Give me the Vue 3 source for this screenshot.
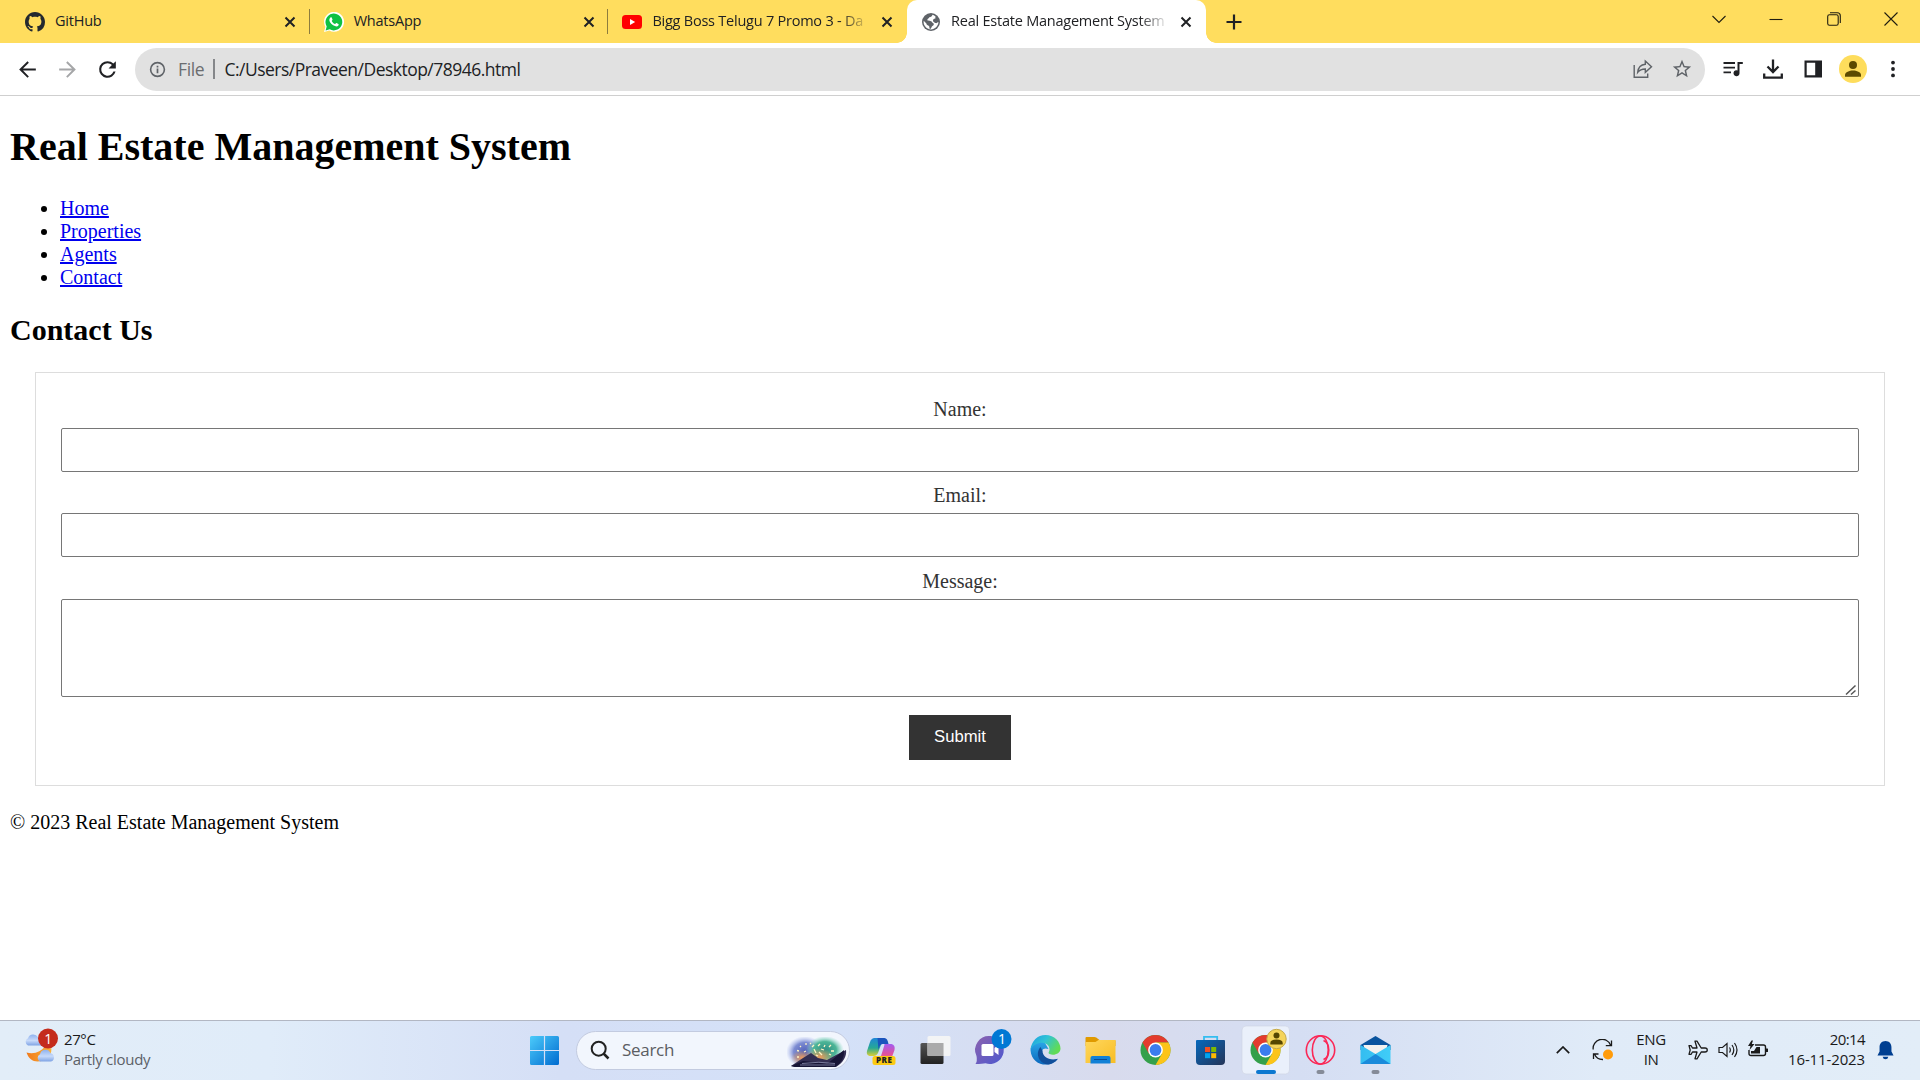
<script setup>
const links = ['Home', 'Properties', 'Agents', 'Contact']
const tabs = [
  { icon: 'github', title: 'GitHub', cls: 't-github' },
  { icon: 'whatsapp', title: 'WhatsApp', cls: 't-whatsapp' },
  { icon: 'youtube', title: 'Bigg Boss Telugu 7 Promo 3 - Da', cls: 't-youtube' },
  { icon: 'globe', title: 'Real Estate Management System', cls: 't-active', active: true },
]
</script>

<template>
  <div class="screen">
    <div class="tabstrip">
      <div v-for="t in tabs" :key="t.icon" class="tab" :class="[t.cls, { active: t.active }]">
        <svg v-if="t.icon === 'github'" class="fav" viewBox="0 0 16 16"><path fill="#24292f" d="M8 0C3.58 0 0 3.58 0 8c0 3.54 2.29 6.53 5.47 7.59.4.07.55-.17.55-.38 0-.19-.01-.82-.01-1.49-2.01.37-2.53-.49-2.69-.94-.09-.23-.48-.94-.82-1.13-.28-.15-.68-.52-.01-.53.63-.01 1.08.58 1.23.82.72 1.21 1.87.87 2.33.66.07-.52.28-.87.51-1.07-1.78-.2-3.64-.89-3.64-3.95 0-.87.31-1.59.82-2.15-.08-.2-.36-1.02.08-2.12 0 0 .67-.21 2.2.82.64-.18 1.32-.27 2-.27s1.36.09 2 .27c1.53-1.04 2.2-.82 2.2-.82.44 1.1.16 1.92.08 2.12.51.56.82 1.27.82 2.15 0 3.07-1.87 3.75-3.65 3.95.29.25.54.73.54 1.48 0 1.07-.01 1.93-.01 2.2 0 .21.15.46.55.38A8.01 8.01 0 0 0 16 8c0-4.42-3.58-8-8-8z" /></svg>
        <svg v-else-if="t.icon === 'whatsapp'" class="fav" viewBox="0 0 20 20"><path fill="#fff" d="M0 20l1.4-5.2A10 10 0 1 1 5.3 18.6z" /><path fill="#0fc143" d="M1.6 18.4l1.1-4A8.4 8.4 0 1 1 5.7 17.3z" /><path fill="#fff" d="M7 5.3c.4 0 .6 0 .8.5l.7 1.7c.1.3 0 .5-.8 1.4.8 1.5 2 2.6 3.5 3.2.9-1 .9-1.200 1.300-1.100l1.900.900c.4.2.3.9 0 1.500-.6.8-1.700 1.200-2.800.900-3.600-1-6-3.900-6.300-6 0-1.500.9-3 1.700-3z" /></svg>
        <svg v-else-if="t.icon === 'youtube'" class="fav" viewBox="0 0 20 20"><rect y="3" width="20" height="14" rx="3.5" fill="#f00" /><path fill="#fff" d="M8 7l5.200 3L8 13z" /></svg>
        <svg v-else class="fav" viewBox="0 0 20 20"><circle cx="10" cy="10" r="9" fill="#5f6368" /><path fill="#fff" d="M11.500 2.800c-.5 1.700-1.300 2.400-3.200 2.500-.2 1.400-1.800 1.200-2 2.600.9 1.300 3.900.4 4.700 2.100.5 1.200 1.900 1 1.800 2.400-.2 1.300-1.700 1.300-2.200 2.500-.2.9-1.100 2-1.600 2.200-.9-.9-.3-2.300-1-3.200C6.900 13 5.500 13 5.400 11.400L2.700 8.800c-.2 1 0 1.800 0 2.500.7 3.200 3.400 6.100 7.300 6.100s7.400-3.500 7.400-7.400c-1.300.5-1.400 1.300-2.700 1.100-1.400-.2-1.400-1.500-2.700-1.700 0-2 .5-2.800 2.400-2.800.2-.9-.4-1.100.3-1.800A7 7 0 0 0 11.500 2.800z" /></svg>
        <span class="tab-title">{{ t.title }}</span>
        <svg class="tab-x" viewBox="0 0 12 12"><path d="M1.500 1.500l9 9M10.500 1.500l-9 9" stroke="#202124" stroke-width="2" /></svg>
      </div>
      <svg class="newtab" viewBox="0 0 16 16"><path d="M8 .5v15M.5 8h15" stroke="#202124" stroke-width="2.200" /></svg>
      <div class="winbtns">
        <svg viewBox="0 0 14 14"><path d="M.5 4l6.500 6.500L13.500 4" /></svg>
        <svg viewBox="0 0 14 14"><path d="M.5 7.500h13" /></svg>
        <svg viewBox="0 0 14 14"><rect x=".7" y="2.700" width="10.500" height="10.500" rx="1.800" /><path d="M3 .700h7.300a3 3 0 0 1 3 3V11" /></svg>
        <svg viewBox="0 0 14 14"><path d="M.5.5l13 13M13.500.5l-13 13" /></svg>
      </div>
    </div>

    <div class="toolbar">
      <div class="nav">
        <svg viewBox="0 0 24 24"><path fill="#202124" d="M20 11.100H7.700l5.600-5.700L12 4l-8 8 8 8 1.300-1.400-5.600-5.700H20z" /></svg>
        <svg viewBox="0 0 24 24"><path fill="#a5a6a8" d="M4 11.100h12.300l-5.600-5.700L12 4l8 8-8 8-1.300-1.400 5.600-5.700H4z" /></svg>
        <svg viewBox="0 0 24 24"><path fill="#202124" d="M17.650 6.350A7.960 7.960 0 0 0 12 4a8 8 0 1 0 7.730 10h-2.080A6 6 0 1 1 12 6c1.660 0 3.140.69 4.220 1.780L13 11h7V4z" /></svg>
      </div>
      <div class="omnibox">
        <svg class="info" viewBox="0 0 18 18"><circle cx="9" cy="9" r="7.300" fill="none" stroke="#5f6368" stroke-width="1.700" /><path d="M9 8v5M9 5v1.800" stroke="#5f6368" stroke-width="1.800" /></svg>
        <span class="scheme">File</span>
        <i class="bar"></i>
        <span class="url">C:/Users/Praveen/Desktop/78946.html</span>
        <svg class="share" viewBox="0 0 20 20" fill="none" stroke="#5f6368" stroke-width="1.400"><path d="M1.200 6v12.300h13.500V14.500" /><path d="M12.300 2l6.200 5.700-6.200 5.600v-3.300c-3.600 0-5.800 1-7.600 3.300.5-4.400 3-7.600 7.600-8z" /></svg>
        <svg class="star" viewBox="0 0 24 24"><path fill="#5f6368" d="M22 9.240l-7.190-.62L12 2 9.190 8.630 2 9.240l5.460 4.730L5.820 21 12 17.270 18.180 21l-1.630-7.030L22 9.240zM12 15.400l-3.760 2.270 1-4.280-3.320-2.880 4.380-.38L12 6.100l1.710 4.040 4.380.38-3.320 2.880 1 4.280L12 15.400z" /></svg>
      </div>
      <div class="actions">
        <svg viewBox="0 0 24 24"><path fill="#202124" d="M2.500 5h11.500v1.900H2.500zM2.500 9.700h11.500v1.900H2.500zM2.500 14.400h7.500v1.900H2.500zM16.500 5H21.800v2H18.500v9.200a3 3 0 1 1-2-2.800z" /></svg>
        <svg viewBox="0 0 24 24"><path d="M12 2.500v12M6.500 9.500l5.500 5.500 5.500-5.500M3.200 16.500v4.200h17.600v-4.200" fill="none" stroke="#202124" stroke-width="2.300" /></svg>
        <svg viewBox="0 0 24 24"><path fill="#202124" fill-rule="evenodd" d="M3.500 3.500h17.500v17h-17.500zM5.700 5.700v12.600h8.500V5.700z" /></svg>
        <svg class="avatar" viewBox="0 0 28 28"><circle cx="14" cy="14" r="14" fill="#fedd5c" /><circle cx="14" cy="10" r="4" fill="#5c4a00" /><path fill="#5c4a00" d="M6 21.700v-1.700c0-3 4.500-4.500 8-4.500s8 1.500 8 4.500v1.700z" /></svg>
        <svg viewBox="0 0 24 24" fill="#202124"><circle cx="12" cy="5.600" r="1.900" /><circle cx="12" cy="12" r="1.900" /><circle cx="12" cy="18.400" r="1.900" /></svg>
      </div>
    </div>

    <main class="page">
      <h1>Real Estate Management System</h1>
      <ul>
        <li v-for="l in links" :key="l"><a href="#">{{ l }}</a></li>
      </ul>
      <h2>Contact Us</h2>
      <form @submit.prevent>
        <label>Name:</label>
        <input type="text" />
        <label>Email:</label>
        <input type="email" />
        <label class="msg">Message:</label>
        <div class="area">
          <textarea></textarea>
          <svg class="grip" viewBox="0 0 12 12"><path d="M1 10.500L10.500 1.500M6 10.500l4.500-4" stroke="#555" stroke-width="1.500" /></svg>
        </div>
        <button>Submit</button>
      </form>
      <footer>© 2023 Real Estate Management System</footer>
    </main>

    <div class="taskbar">
      <div class="weather">
        <svg viewBox="0 0 36 40">
          <defs>
            <linearGradient id="cl" x1="0" y1="0" x2="0" y2="1"><stop offset="0" stop-color="#8fb2ee" /><stop offset=".55" stop-color="#c7dafa" /><stop offset="1" stop-color="#7fa3e4" /></linearGradient>
            <linearGradient id="mo" x1="0" y1="0" x2="1" y2="0"><stop offset="0" stop-color="#f07a1c" /><stop offset="1" stop-color="#fbb43a" /></linearGradient>
          </defs>
          <path fill="url(#cl)" d="M4 18.500a4 4 0 0 1 0-7.300 5.500 5.500 0 0 1 10-1A4.500 4.500 0 0 1 19 18.500z" />
          <path fill="url(#mo)" d="M2.500 25.500c8 2 15-1 18-6l7 2c0 9-7 13-14 13-5 0-9-3-11-9z" />
          <path fill="url(#cl)" d="M16 34.500a4 4 0 0 1 0-7.300 5.500 5.500 0 0 1 10.500-1A4.300 4.300 0 0 1 27 34.500z" />
          <circle cx="24" cy="11.500" r="10" fill="#c42b1c" />
          <text x="24.300" y="16.500" text-anchor="middle" font-size="14" fill="#fff">1</text>
        </svg>
        <div class="wtext"><span class="temp">27°C</span><span class="cond">Partly cloudy</span></div>
      </div>

      <svg class="start" viewBox="0 0 29 29">
        <defs><linearGradient id="win" x1="0" y1="0" x2="1" y2="1"><stop offset="0" stop-color="#4ccbfa" /><stop offset="1" stop-color="#006bd0" /></linearGradient></defs>
        <path fill="url(#win)" d="M1.500 0H13.900V13.900H0V1.500Q0 0 1.500 0zM15.100 0H27.500Q29 0 29 1.500V13.900H15.100zM0 15.100H13.900V29H1.500Q0 29 0 27.500zM15.100 15.100H29V27.500Q29 29 27.500 29H15.100z" />
      </svg>

      <div class="search">
        <svg class="lens" viewBox="0 0 20 20"><circle cx="8.700" cy="8.700" r="7" fill="none" stroke="#222" stroke-width="2" /><path d="M13.500 13.500l5 5" stroke="#222" stroke-width="2.500" /></svg>
        <span>Search</span>
        <svg class="scene" viewBox="0 0 60 31">
          <defs>
            <radialGradient id="sb"><stop offset="0" stop-color="#5260b8" /><stop offset=".6" stop-color="#7d8cd2" /><stop offset="1" stop-color="#aebcf0" stop-opacity="0" /></radialGradient>
            <radialGradient id="sg"><stop offset="0" stop-color="#2f8f84" /><stop offset=".6" stop-color="#4cb596" /><stop offset="1" stop-color="#8fdcc8" stop-opacity="0" /></radialGradient>
            <radialGradient id="so"><stop offset="0" stop-color="#f09a5c" /><stop offset="1" stop-color="#e09a50" stop-opacity="0" /></radialGradient>
          </defs>
          <ellipse cx="18" cy="15" rx="19" ry="16" fill="url(#sb)" /><ellipse cx="38" cy="13" rx="19" ry="14" fill="url(#sg)" />
          <ellipse cx="33" cy="20" rx="14" ry="9" fill="url(#so)" /><ellipse cx="15" cy="21" rx="11" ry="8" fill="url(#so)" />
          <path fill="#342f52" d="M4 29l12-8 8-5 7 5 9 2 9-5 6-3 4-2c1 6-3 13-10 17H8z" />
          <path fill="#171535" d="M4 29l12-5 10 1 14 2 17-14q1 11-9 17H8z" />
          <path d="M15 26.500q17-2.500 33 0M13 28h35" stroke="#8d8fb0" stroke-width=".8" fill="none" />
          <path d="M12 14l-2-.5M14 10l-1-1M19 8V6M25 10l2-2M17 15l2-1M31 9l2-2M37 10l1-2M42 10l2-2M44 14h3M42 17l2 1M27 12l2 4M32 15l3 3M10 20h2M23 7l1-1M34 12l3 1M29 18l2 1" stroke="#fff3c4" stroke-width="1.300" />
        </svg>
      </div>

      <div class="apps">
        <svg viewBox="-27.5 -30 55 60">
          <defs>
            <linearGradient id="c1" x1="0" y1="0" x2="0" y2="1"><stop offset="0" stop-color="#1f86d8" /><stop offset=".55" stop-color="#25a895" /><stop offset="1" stop-color="#dccf35" /></linearGradient>
            <linearGradient id="c2" x1="0" y1="0" x2="0" y2="1"><stop offset="0" stop-color="#a35cf0" /><stop offset=".5" stop-color="#e0519f" /><stop offset="1" stop-color="#f58a5c" /></linearGradient>
          </defs>
          <path fill="url(#c1)" d="M-6-12H3L-2.500 3Q-4 6-7 6h-4q-3.500-1-2.500-5l3-9Q-9-12-6-12z" />
          <path fill="#1a54bd" d="M-3-12H4Q7-12 8-6H2Q-1-6-2 0z" />
          <path fill="url(#c2)" d="M4-6H11Q15-5 14 0L10 11Q9 14 5 14H-2L3-2Q4-5 4-6z" />
          <rect x="-8" y="6" width="23" height="9" rx="2.500" fill="#fcca12" />
          <text x="3.700" y="13.400" text-anchor="middle" font-size="8" font-weight="800" letter-spacing=".6" fill="#222">PRE</text>
        </svg>
        <svg viewBox="-27.5 -30 55 60">
          <defs><linearGradient id="tv" x1="0" y1="0" x2="0" y2="1"><stop offset="0" stop-color="#555" /><stop offset="1" stop-color="#222" /></linearGradient></defs>
          <rect x="-15" y="-7" width="23" height="21" rx="1.500" fill="url(#tv)" />
          <rect x="-8" y="-14" width="23" height="20" rx="1.500" fill="#f4f4f4" fill-opacity=".95" /><path d="M-8-7H8V6H-8z" fill="#aaa" />
        </svg>
        <svg viewBox="-27.5 -30 55 60">
          <defs><linearGradient id="ch" x1="0" y1="0" x2="1" y2="1"><stop offset="0" stop-color="#8c62ae" /><stop offset="1" stop-color="#4d58cf" /></linearGradient></defs>
          <path fill="url(#ch)" d="M0-14A14 14 0 1 1-5 13.300Q-8 14-15 14q2-3 1-8A14 14 0 0 1 0-14z" />
          <rect x="-9" y="-6" width="12" height="12" rx="1.500" fill="#fff" /><path fill="#fff" d="M4-2L8-5V5L4 2z" />
          <circle cx="11" cy="-11" r="10" fill="#0078d4" /><text x="11.500" y="-6" text-anchor="middle" font-size="14" fill="#fff">1</text>
        </svg>
        <svg viewBox="-27.5 -30 55 60">
          <defs>
            <linearGradient id="e1" x1="0" y1="0" x2="1" y2=".5"><stop offset="0" stop-color="#1b9de2" /><stop offset=".5" stop-color="#30c3d6" /><stop offset="1" stop-color="#61db55" /></linearGradient>
            <linearGradient id="e2" x1="0" y1="0" x2="0" y2="1"><stop offset="0" stop-color="#2aa8e8" /><stop offset="1" stop-color="#0c68bd" /></linearGradient>
          </defs>
          <path fill="url(#e2)" d="M-15 0C-14-8-7-10-1-8L3-1C-3-3-4 1-3 4c2 6 9 7 15 5C6 18-14 17-15 0z" />
          <path fill="#114f9b" d="M-5-3C-11 4-6 14 3 14.500 7 14 11 11 12.500 8.800 4 11-3 7-3 1z" />
          <path fill="url(#e1)" d="M-15-.5C-14-9-8-15 0-15 9-15 15-8 15-1.500 15 4 8 6 4 4 2 3 4 2 4-.5 4-9-10-10-15-.5z" />
        </svg>
        <svg viewBox="-27.5 -30 55 60">
          <defs><linearGradient id="fo" x1="0" y1="0" x2="1" y2="1"><stop offset="0" stop-color="#ffd75e" /><stop offset="1" stop-color="#f8bd24" /></linearGradient></defs>
          <path fill="#e09a00" d="M-15-12q0-1 1-1h8q2 0 3 1.500L-1-10h15q1 0 1 1v5h-30z" /><path fill="url(#fo)" d="M-15-8h10l3-2H15V13H-15z" />
          <path fill="#1180d6" d="M-10 13.500V8q0-2 2-2H8q2 0 2 2v5.500z" /><path d="M-6.500 9.500h13" stroke="#084c96" />
        </svg>
        <svg viewBox="-27.5 -30 55 60">
          <g id="chrome"><circle r="15" fill="#34a04b" /><path fill="#e33b2e" d="M-13-7.500A15 15 0 0 1 13-7.500H0L-6.500 3.700z" /><path fill="#fcc419" d="M13-7.500A15 15 0 0 1 0 15L6.500 3.700 0-7.500z" /><circle r="7.400" fill="#fff" /><circle r="5.900" fill="#3b7ded" /></g>
        </svg>
        <svg viewBox="-27.5 -30 55 60">
          <defs><linearGradient id="st" x1="0" y1="0" x2="1" y2="1"><stop offset="0" stop-color="#0669bd" /><stop offset="1" stop-color="#253457" /></linearGradient></defs>
          <path d="M-6.500-9v-4.200H6.700V-9" fill="none" stroke="#35bdf0" stroke-width="1.800" />
          <path fill="url(#st)" d="M-13.500-10H13.500q1 0 1 1V11q0 4-4 4h-21q-4 0-4-4V-9q0-1 1-1z" />
          <path fill="#f25022" d="M-5.500-3H-.5V2h-5z" /><path fill="#7fba00" d="M.7-3h5V2h-5z" /><path fill="#00a4ef" d="M-5.500 3.200h5v5h-5z" /><path fill="#ffb900" d="M.7 3.200h5v5h-5z" />
        </svg>
        <svg viewBox="-27.5 -30 55 60">
          <rect x="-23.5" y="-24" width="47.500" height="48" rx="4" fill="#eaf0fb" stroke="#d0d6e5" stroke-width=".7" />
          <use href="#chrome" />
          <circle cx="11" cy="-11" r="9.700" fill="#f5d45a" stroke="#c6a946" stroke-width="1" /><circle cx="11" cy="-14.500" r="3" fill="#554500" /><path fill="#554500" d="M4.800-5.500V-7q0-3.500 6.200-3.500T17.200-7v1.500z" />
          <rect x="-9.500" y="20" width="20" height="4" rx="2" fill="#0c78d0" />
        </svg>
        <svg viewBox="-27.5 -30 55 60">
          <g fill="none" stroke="#fb2756" stroke-width="1.600"><circle r="14.200" /><ellipse cx="-.2" rx="8" ry="14" /><path d="M3-9.500C10-7 10 7 3 9.500" /></g>
          <rect x="-4" y="20" width="8" height="4" rx="2" fill="#858b98" />
        </svg>
        <svg viewBox="-27.5 -30 55 60">
          <defs><linearGradient id="ma" x1="0" y1="0" x2="1" y2="0"><stop offset="0" stop-color="#34bdf0" /><stop offset="1" stop-color="#40cdf8" /></linearGradient></defs>
          <path fill="#0a549e" d="M-15-5L0-14 15-5V0h-30z" /><path fill="#f2f1ef" d="M-12-5H12L10 4H-10z" /><path fill="url(#ma)" d="M-15-5L0 4 15-5V14h-30z" /><path fill="#1a8bdb" d="M-15 14L0 4l15 10z" />
          <rect x="-4" y="20" width="8" height="4" rx="2" fill="#858b98" />
        </svg>
      </div>

      <div class="tray">
        <svg class="up" viewBox="0 0 14 8"><path d="M.8 7.200L7 1l6.200 6.200" fill="none" stroke="#1a1a1a" stroke-width="1.700" /></svg>
        <svg class="sync" viewBox="0 0 22 22"><path d="M1.200 10.500A9 9 0 0 1 18.500 6M19.500 1.500v5.200h-5.700M11 20.500A9 9 0 0 1 2.500 15.200M1.500 20v-5h5" fill="none" stroke="#1a1a1a" stroke-width="1.300" /><circle cx="16" cy="15.500" r="5" fill="#ff9b0a" /></svg>
        <div class="lang"><span>ENG</span><span>IN</span></div>
        <svg class="plane" viewBox="0 0 20 20"><path d="M7 1.200h2L13.200 8H17c3 0 3 4 0 4h-3.800L9 18.800H7L9 12H4.500L3 14.300H1L2.200 10 1 5.700h2L4.500 8H9z" fill="none" stroke="#1a1a1a" stroke-width="1.300" stroke-linejoin="round" /></svg>
        <svg class="vol" viewBox="0 0 20 20"><path d="M1 7.500h3.500L9 3.500v13L4.500 12.500H1zM11.500 7.500q1.700 2.500 0 5M14 5q3.600 5 0 10M16.500 3q5 7 0 14" fill="none" stroke="#1a1a1a" stroke-width="1.200" /></svg>
        <svg class="bat" viewBox="0 0 20 20"><path d="M7 5h8.500q2 0 2 2v6.500q0 2-2 2H3q-2 0-2-2V10" fill="none" stroke="#1a1a1a" stroke-width="1.400" /><path fill="#1a1a1a" d="M18 8.500h1.500q.5 0 .5.500v2.500q0 .5-.5.500H18zM8.500 7H12v6.500H3V11h3zM3.500.5L0 6h2.500L1.500 10 6.500 4H3.800L5 .5z" /></svg>
        <div class="clock"><span class="time">20:14</span><span>16-11-2023</span></div>
        <svg class="bell" viewBox="0 0 18 20"><path fill="#003f91" d="M9 0c4 0 6.300 3 6.300 6.500V11l2.200 4.300H.5L2.700 11V6.500C2.700 3 5 0 9 0zM6 16.500h6q-.5 2.700-3 2.700T6 16.500z" /></svg>
      </div>
    </div>
  </div>
</template>

<style>
html, body { margin: 0; overflow: hidden; }
</style>

<style scoped>
* { box-sizing: border-box; }
svg { flex: none; display: block; }
.screen { width: 1920px; height: 1080px; display: flex; flex-direction: column; background: #fff; font-family: "Open Sans", "Noto Sans", sans-serif; color: #202124; overflow: hidden; }

.tabstrip { height: 43px; flex: none; display: flex; align-items: center; background: #ffdd5e; padding-left: 11px; }
.tab { width: 298.7px; height: 43px; display: flex; align-items: center; padding: 0 14px; position: relative; font-size: 14.5px; }
.fav { width: 20px; height: 20px; margin-right: 10px; }
.tab-title { flex: none; width: 215px; margin-right: 14px; white-space: nowrap; line-height: 24px; margin-top: -2px; letter-spacing: -.23px; }
.t-youtube .tab-title, .t-active .tab-title { mask-image: linear-gradient(to right, #000 188px, transparent 218px); }
.tab-x { width: 12px; height: 12px; }
.t-github::after, .t-whatsapp::after { content: ""; position: absolute; right: 0; top: 9px; width: 1px; height: 25px; background: #8d7c3d; }
.active { background: #fff; border-radius: 10px 10px 0 0; }
.active::before, .active::after { content: ""; position: absolute; bottom: 0; width: 10px; height: 10px; }
.active::before { left: -10px; background: radial-gradient(circle at 0 0, transparent 9.5px, #fff 10px); }
.active::after { right: -10px; background: radial-gradient(circle at 100% 0, transparent 9.5px, #fff 10px); }
.newtab { width: 16px; height: 16px; margin-left: 20px; }
.winbtns { margin-left: auto; margin-right: 22px; display: flex; gap: 43.3px; margin-top: -6px; }
.winbtns svg { width: 14px; height: 14px; fill: none; stroke: #201d10; stroke-width: 1.1; }

.toolbar { height: 53px; flex: none; display: flex; align-items: center; border-bottom: 1px solid #cfcfcf; padding: 0 7px 0 15px; }
.nav { display: flex; gap: 15px; width: 120px; }
.nav svg { width: 25px; height: 25px; }
.omnibox { width: 1570px; flex: none; height: 43px; border-radius: 22px; background: #e1e1e1; display: flex; align-items: center; padding-left: 14px; font-size: 17.5px; }
.info { width: 17px; height: 17px; margin-right: 12px; }
.scheme { width: 35px; color: #6b6d70; letter-spacing: -.4px; }
.bar { width: 1.5px; height: 20px; background: #85878a; margin-right: 10px; }
.url { letter-spacing: -.52px; white-space: nowrap; }
.share { width: 20px; height: 20px; margin-left: auto; margin-right: 18px; }
.star { width: 22px; height: 22px; margin-right: 12px; }
.actions { display: flex; flex: none; align-items: center; margin-left: 8px; }
.actions svg { width: 24px; height: 24px; margin: 0 8px; }
.actions .avatar { width: 28px; height: 28px; margin: 0 6px; }

.page { flex: 1; min-height: 0; padding: 28px 10px 0; font-family: "Liberation Serif", "Times New Roman", serif; font-size: 20px; line-height: 23px; color: #000; }
h1 { margin: 0; font-size: 40px; line-height: 46px; }
ul { margin: 27px 0 24px; padding-left: 50px; }
a { color: #0000ee; text-decoration: underline; }
h2 { margin: 0 0 25px; font-size: 30px; line-height: 34px; }
form { margin: 0 25px; height: 414px; border: 1px solid #ddd; padding: 25px; display: flex; flex-direction: column; }
label { height: 23px; text-align: center; color: #333; margin-bottom: 7px; }
input { width: 100%; height: 44px; flex: none; border: 1px solid #767676; border-radius: 2px; background: #fff; outline: 0; margin: 0 0 12px; }
input + label { margin-bottom: 6px; }
.msg { margin-top: 1px; }
.area { position: relative; height: 98px; flex: none; }
textarea { display: block; width: 100%; height: 98px; resize: none; border: 1px solid #767676; border-radius: 2px; outline: 0; }
.grip { position: absolute; right: 2px; bottom: 1px; width: 12px; height: 12px; fill: none; }
button { align-self: center; width: 102px; height: 45px; margin-top: 18px; border: 0; background: #333; color: #fff; padding: 0 0 1px; font: 16.67px "Liberation Sans", Arial, sans-serif; }
footer { margin-top: 25px; }

.taskbar { height: 60px; flex: none; display: flex; align-items: center; border-top: 1px solid #b2b7c3; padding-bottom: 1px; background: linear-gradient(90deg, #e2edf8 0, #e0ecf9 270px, #d5dff6 560px, #d4e1f8 840px, #d8dbed 1110px, #d5def3 1300px, #e0ebf8 1600px, #e2edf8 100%); font-size: 15px; line-height: 20px; }
.weather { width: 530px; display: flex; align-items: center; padding-left: 24px; }
.weather svg { width: 36px; height: 40px; margin-top: -6px; margin-right: 4px; }
.wtext, .lang, .clock { display: flex; flex-direction: column; }
.wtext { margin-top: -3px; }
.temp { color: #1a1a1a; letter-spacing: -.4px; }
.cond { color: #5c6168; letter-spacing: -.28px; }
.start { width: 29px; height: 29px; margin-right: 17px; }
.search { width: 274px; height: 39px; border-radius: 20px; border: 1px solid #c3cbe0; background: #f2f6fd; display: flex; align-items: center; padding-left: 13px; font-size: 17px; color: #5b5d62; }
.search span { letter-spacing: -.3px; }
.lens { width: 20px; height: 20px; margin-right: 12px; }
.scene { width: 60px; height: 31px; margin-left: auto; margin-right: 2px; margin-top: 4px; }
.apps { display: flex; margin-left: 2.7px; }
.apps svg { width: 55px; height: 60px; }
.tray { display: flex; align-items: center; margin-left: auto; padding-right: 26px; color: #1a1a1a; }
.up { width: 14px; height: 8px; margin-right: 22px; }
.sync { width: 22px; height: 22px; margin-right: 17px; }
.lang { width: 40px; align-items: center; text-align: center; letter-spacing: -.4px; margin-right: 17px; margin-top: -2px; }
.plane, .vol, .bat { width: 20px; height: 20px; margin-right: 10px; }
.clock { width: 87px; align-items: flex-end; letter-spacing: -.13px; margin-right: 12px; margin-top: -3px; }
.time { letter-spacing: -.6px; }
.bell { width: 17px; height: 19px; }
</style>
